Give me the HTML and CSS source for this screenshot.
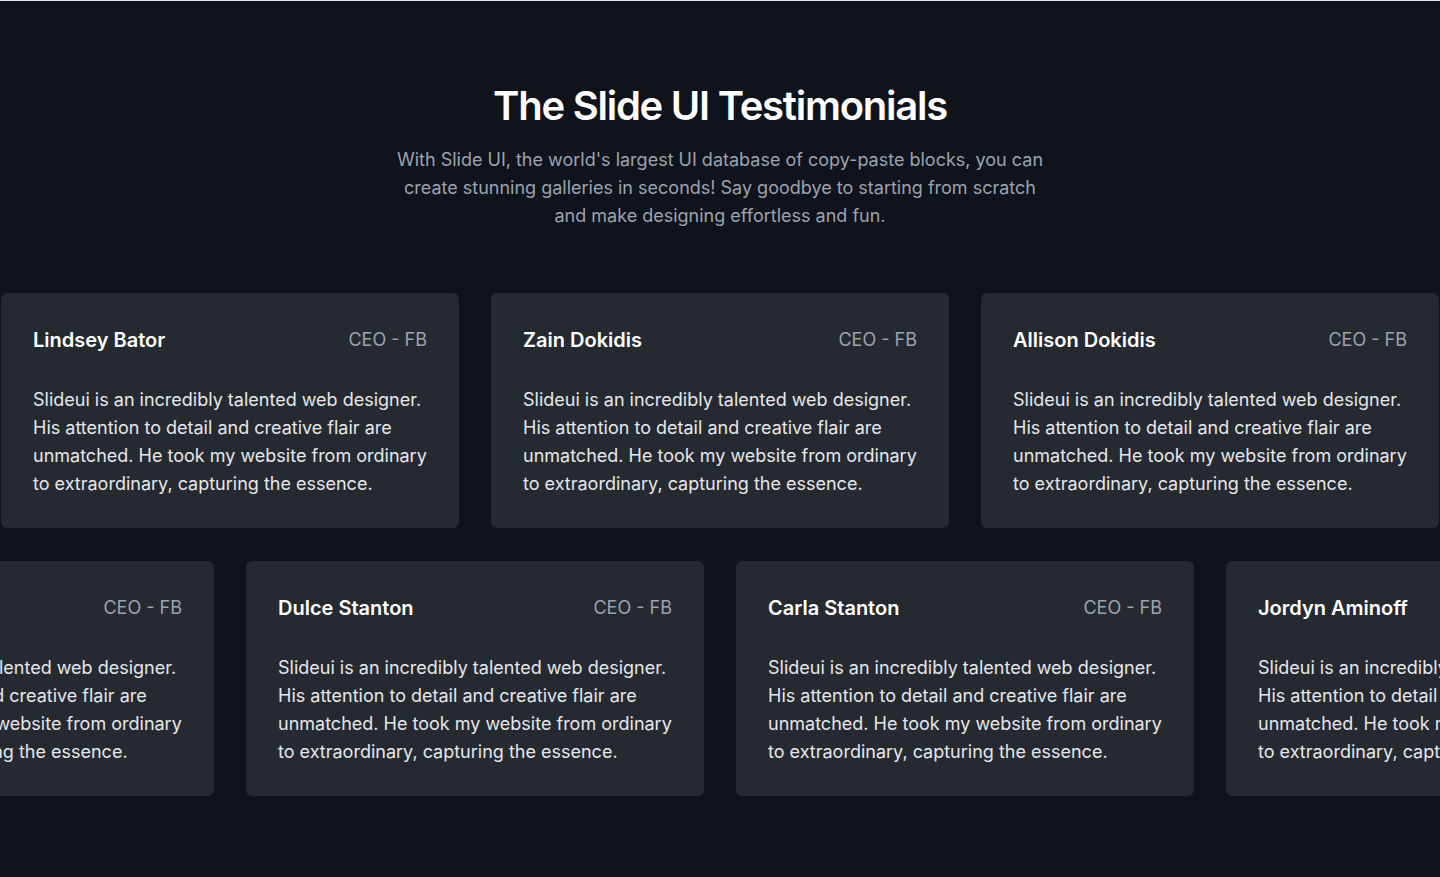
FILE: index.html
```html
<!DOCTYPE html>
<html lang="en">
<head>
<meta charset="utf-8">
<title>The Slide UI Testimonials</title>
<link rel="stylesheet" href="styles.css">
</head>
<body>
<section class="testimonials">
  <header class="intro">
    <h1 class="title">The Slide UI Testimonials</h1>
    <p class="lead">With Slide UI, the world's largest UI database of copy-paste blocks, you can create stunning galleries in seconds! Say goodbye to starting from scratch and make designing effortless and fun.</p>
  </header>
  <div class="rows">
    <div class="track">
      <div class="row row-a">
        <article class="card"><div class="card-head"><h3 class="name">Lindsey Bator</h3><span class="role">CEO - FB</span></div><p class="quote">Slideui is an incredibly talented web designer. His attention to detail and creative flair are unmatched. He took my website from ordinary to extraordinary, capturing the essence.</p></article>
        <article class="card"><div class="card-head"><h3 class="name">Zain Dokidis</h3><span class="role">CEO - FB</span></div><p class="quote">Slideui is an incredibly talented web designer. His attention to detail and creative flair are unmatched. He took my website from ordinary to extraordinary, capturing the essence.</p></article>
        <article class="card"><div class="card-head"><h3 class="name">Allison Dokidis</h3><span class="role">CEO - FB</span></div><p class="quote">Slideui is an incredibly talented web designer. His attention to detail and creative flair are unmatched. He took my website from ordinary to extraordinary, capturing the essence.</p></article>
      </div>
    </div>
    <div class="track">
      <div class="row row-b">
        <article class="card"><div class="card-head"><h3 class="name">Kaiya Workman</h3><span class="role">CEO - FB</span></div><p class="quote">Slideui is an incredibly talented web designer. His attention to detail and creative flair are unmatched. He took my website from ordinary to extraordinary, capturing the essence.</p></article>
        <article class="card"><div class="card-head"><h3 class="name">Dulce Stanton</h3><span class="role">CEO - FB</span></div><p class="quote">Slideui is an incredibly talented web designer. His attention to detail and creative flair are unmatched. He took my website from ordinary to extraordinary, capturing the essence.</p></article>
        <article class="card"><div class="card-head"><h3 class="name">Carla Stanton</h3><span class="role">CEO - FB</span></div><p class="quote">Slideui is an incredibly talented web designer. His attention to detail and creative flair are unmatched. He took my website from ordinary to extraordinary, capturing the essence.</p></article>
        <article class="card"><div class="card-head"><h3 class="name">Jordyn Aminoff</h3><span class="role">CEO - FB</span></div><p class="quote">Slideui is an incredibly talented web designer. His attention to detail and creative flair are unmatched. He took my website from ordinary to extraordinary, capturing the essence.</p></article>
      </div>
    </div>
  </div>
</section>
</body>
</html>
```
FILE: styles.css
```css
* { box-sizing: border-box; }
html, body { margin: 0; padding: 0; }
body {
  background: #0f131c;
  border-top: 1px solid #e5e7eb;
  font-family: Inter, "Noto Sans", sans-serif;
  color: #e5e7eb;
  height: 877px;
  overflow: hidden;
}
.testimonials {
  padding-top: 81px;
}
.intro {
  max-width: 660px;
  margin: 0 auto;
  text-align: center;
}
.title {
  margin: 0;
  font-size: 40px;
  line-height: 48px;
  font-weight: 600;
  letter-spacing: -1.25px;
  color: #ffffff;
}
.lead {
  margin: 16px 0 0;
  font-size: 18px;
  line-height: 28px;
  color: #9ca3af;
}
.rows {
  margin-top: 63px;
  display: flex;
  flex-direction: column;
  gap: 33px;
}
.track { overflow: hidden; }
.row {
  display: flex;
  gap: 32px;
  width: max-content;
}
.row-a { transform: translateX(1px); }
.row-b { transform: translateX(-244px); }
.card {
  flex: none;
  width: 458px;
  height: 235px;
  padding: 33px 32px 31px;
  background: #252a31;
  border-radius: 6px;
}
.card-head {
  display: flex;
  justify-content: space-between;
  align-items: center;
  height: 28px;
}
.name {
  margin: 0;
  font-size: 20px;
  line-height: 28px;
  font-weight: 600;
  color: #ffffff;
}
.role {
  font-size: 18px;
  line-height: 28px;
  color: #9ca3af;
}
.quote {
  margin: 32px 0 0;
  font-size: 18px;
  line-height: 28px;
  color: #e5e7eb;
}
```
